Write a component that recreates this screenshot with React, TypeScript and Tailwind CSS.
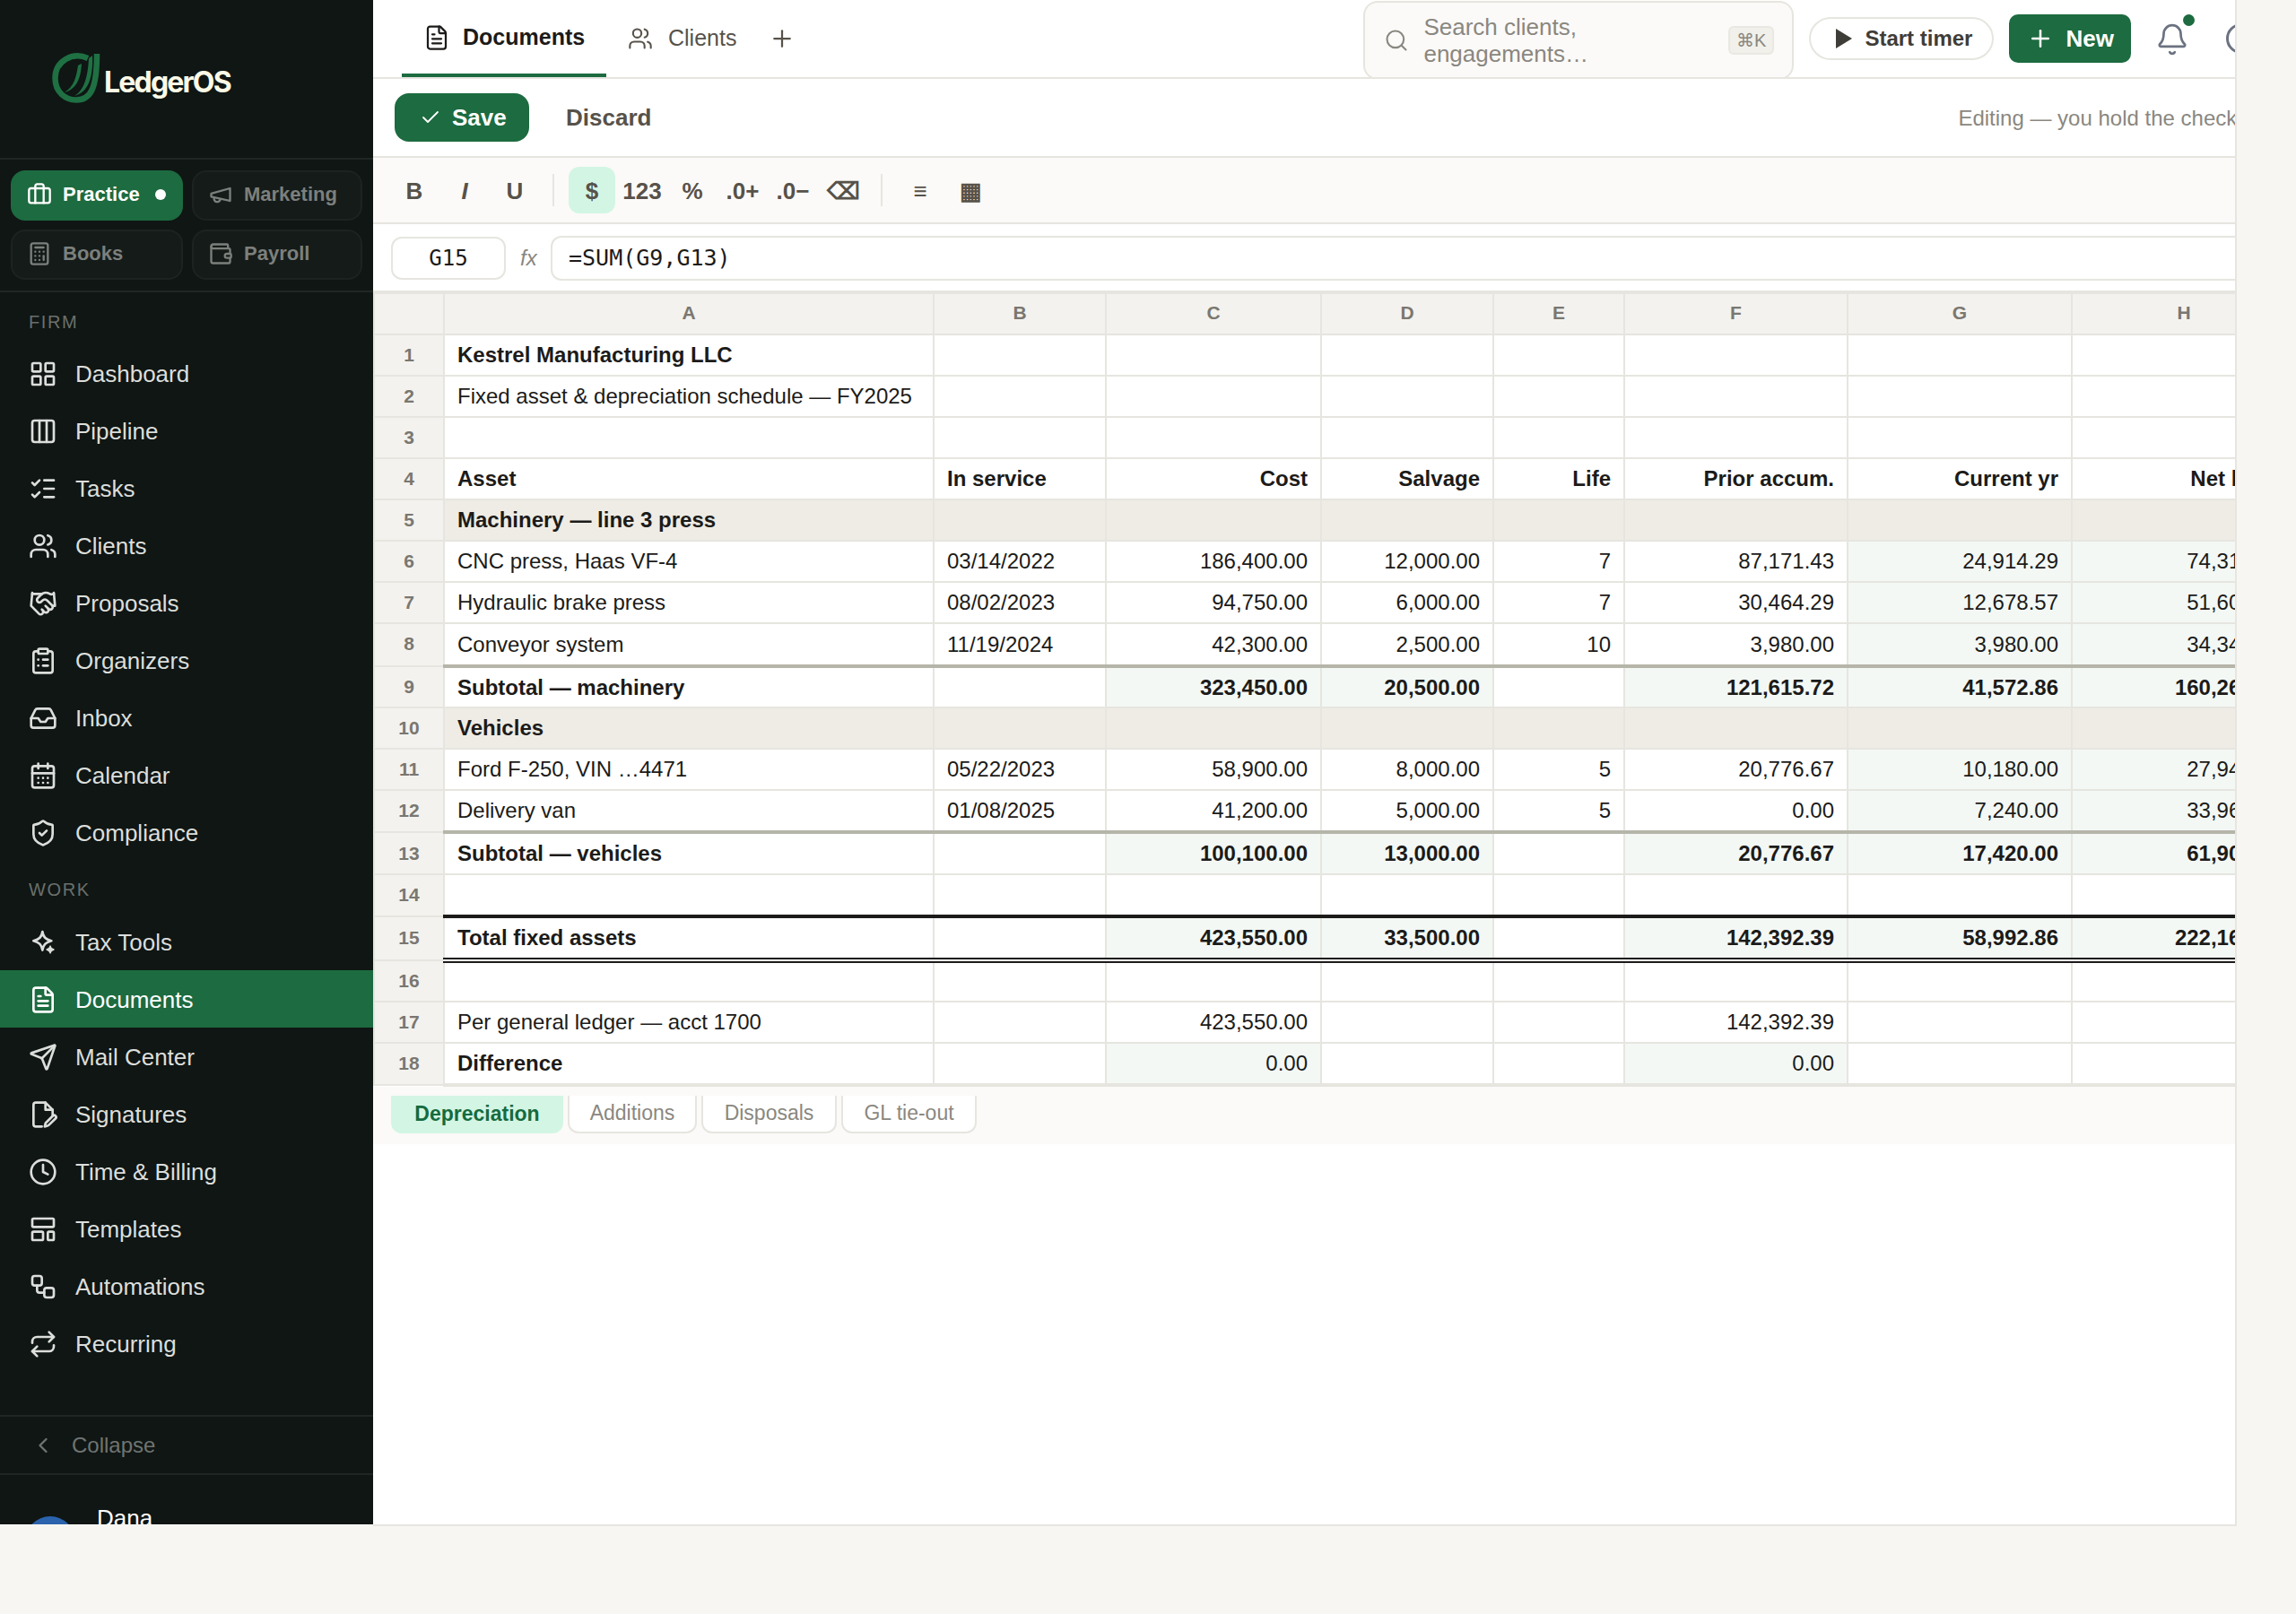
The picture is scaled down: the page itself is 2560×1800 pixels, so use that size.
import React from 'react';
import clsx from 'clsx';
import {
  Briefcase, Calculator, Wallet, LayoutGrid, Columns3, ListChecks, Users, Handshake, ClipboardList,
  Inbox, CalendarDays, ShieldCheck, FileText, Send, Clock, LayoutTemplate, Workflow, Repeat,
  ChevronLeft, Plus, Check, Search, Bell,
} from 'lucide-react';

const IconSparkles = ({ size = 32 }: { size?: number }) => (
  <svg width={size} height={size} viewBox="0 0 24 24" fill="none" stroke="currentColor" strokeWidth="2" strokeLinejoin="round">
    <path d="M11.5 3C12.2 7.5 14 9.5 19 10.7C14 12 12.2 14 11.5 18.5C10.8 14 9 12 4 10.7C9 9.5 10.8 7.5 11.5 3Z" />
    <path d="M18 15c.3 1.6 1.2 2.5 3 3c-1.8.5-2.7 1.4-3 3c-.3-1.6-1.2-2.5-3-3c1.8-.5 2.7-1.4 3-3Z" fill="currentColor" strokeWidth="1" />
  </svg>
);

const IconSignature = ({ size = 32 }: { size?: number }) => (
  <svg width={size} height={size} viewBox="0 0 24 24" fill="none" stroke="currentColor" strokeWidth="2" strokeLinecap="round" strokeLinejoin="round">
    <path d="M11 22H6a2 2 0 0 1-2-2V4a2 2 0 0 1 2-2h8l6 6v5" />
    <path d="M14 2v6h6" />
    <path d="M22.4 15.4a1.6 1.6 0 0 0-2.3-2.3l-5.6 5.6a2 2 0 0 0-.5.9l-.6 2.4 2.4-.6a2 2 0 0 0 .9-.5Z" />
  </svg>
);

const IconMegaphone = ({ size = 28 }: { size?: number }) => (
  <svg width={size} height={size} viewBox="0 0 24 24" fill="none" stroke="currentColor" strokeWidth="2" strokeLinecap="round" strokeLinejoin="round">
    <path d="m3 11 18-5v12L3 14v-3z" />
    <path d="M11.6 16.8a3 3 0 1 1-5.8-1.6" />
  </svg>
);

const LogoMark = () => (
  <svg width="58" height="62" viewBox="0 0 58 62" fill="none">
    <path d="M40 8C22 0 3.5 12 3.5 30C3.5 46 15 54.5 27 54.5C44 54.5 50 40 50 3" stroke="#1f7043" strokeWidth="6.5" />
    <path d="M14 46C24 40 27 30 29 16L33 14C32 30 28 42 14 46Z" fill="#1f7043" />
    <path d="M25 50C37 43 40 26 41 8L45 5C46 28 41 46 25 50Z" fill="#1f7043" />
  </svg>
);

const firmNav = [
  { label: 'Dashboard', icon: <LayoutGrid size={32} /> },
  { label: 'Pipeline', icon: <Columns3 size={32} /> },
  { label: 'Tasks', icon: <ListChecks size={32} /> },
  { label: 'Clients', icon: <Users size={32} /> },
  { label: 'Proposals', icon: <Handshake size={32} /> },
  { label: 'Organizers', icon: <ClipboardList size={32} /> },
  { label: 'Inbox', icon: <Inbox size={32} /> },
  { label: 'Calendar', icon: <CalendarDays size={32} /> },
  { label: 'Compliance', icon: <ShieldCheck size={32} /> },
];

const workNav = [
  { label: 'Tax Tools', icon: <IconSparkles /> },
  { label: 'Documents', icon: <FileText size={32} />, active: true },
  { label: 'Mail Center', icon: <Send size={32} /> },
  { label: 'Signatures', icon: <IconSignature /> },
  { label: 'Time & Billing', icon: <Clock size={32} /> },
  { label: 'Templates', icon: <LayoutTemplate size={32} /> },
  { label: 'Automations', icon: <Workflow size={32} /> },
  { label: 'Recurring', icon: <Repeat size={32} /> },
];

const NavItem = ({ label, icon, active }: { label: string; icon: React.ReactNode; active?: boolean }) => (
  <div className={clsx('flex h-16 shrink-0 items-center gap-5 pt-[2px] pl-8 text-[26px]', active ? 'bg-[#1d6b40] text-white' : 'text-[#dcdedb]')}>
    {icon}
    <span>{label}</span>
  </div>
);

const Segment = ({ label, icon, active }: { label: string; icon: React.ReactNode; active?: boolean }) => (
  <div
    className={clsx(
      'flex h-[56px] items-center gap-[12px] rounded-2xl border-2 pb-[3px] pl-[16px] text-[22px] font-bold',
      active ? 'border-[#1d6b40] bg-[#1d6b40] text-white' : 'border-[#1c2321] bg-[#151b19] text-[#7c807d]',
    )}
  >
    {icon}
    <span>{label}</span>
    {active && <span className="ml-[5px] size-3 rounded-full bg-white" />}
  </div>
);

const Sidebar = () => (
  <aside className="flex h-full w-[416px] shrink-0 flex-col overflow-hidden bg-[#0f1614]">
    <div className="flex h-[178px] shrink-0 items-center border-b-2 border-[#1f2624] pl-[58px]">
      <LogoMark />
      <span className="mt-[8px] font-['Inter',sans-serif] text-[32px] font-bold tracking-[-1.8px] text-[#fbf9e6]">LedgerOS</span>
    </div>
    <div className="grid shrink-0 grid-cols-[192px_190px] gap-x-[10px] gap-y-[10px] border-b-2 border-[#1f2624] pt-3 pb-3 pl-3">
      <Segment label="Practice" icon={<Briefcase size={28} />} active />
      <Segment label="Marketing" icon={<IconMegaphone />} />
      <Segment label="Books" icon={<Calculator size={28} />} />
      <Segment label="Payroll" icon={<Wallet size={28} />} />
    </div>
    <div className="shrink-0 pt-[21px] pb-[13px] pl-8 text-[20px] leading-6 tracking-[1.6px] text-[#6b706c]">FIRM</div>
    {firmNav.map((n) => <NavItem key={n.label} {...n} />)}
    <div className="shrink-0 pt-5 pb-[14px] pl-8 text-[20px] leading-6 tracking-[1.6px] text-[#6b706c]">WORK</div>
    {workNav.map((n) => <NavItem key={n.label} {...n} />)}
    <div className="mt-[48px] flex h-[67px] shrink-0 items-center gap-[18px] border-y-2 border-[#1f2624] pl-[34px] text-[24px] text-[#6f7471]">
      <ChevronLeft size={28} />
      <span>Collapse</span>
    </div>
    <div className="flex shrink-0 gap-[24px] pt-[32px] pl-[28px]">
      <div className="mt-[14px] size-[56px] rounded-full bg-[#2b63ad]" />
      <div className="text-[26px] leading-8 text-white">Dana<br />Whitfield</div>
    </div>
  </aside>
);

const TopBar = () => (
  <div className="flex h-[88px] shrink-0 items-center overflow-hidden border-b-2 border-[#e6e5df] pl-8">
    <div className="flex h-[86px] w-[228px] shrink-0 items-center gap-[14px] border-b-4 border-[#1d6b40] pt-[2px] pl-6 text-[25px] font-bold text-[#1c1b19]">
      <FileText size={30} strokeWidth={1.8} />
      <span>Documents</span>
    </div>
    <div className="ml-6 flex shrink-0 items-center gap-[17px] text-[25px] text-[#57524a]">
      <Users size={28} strokeWidth={1.8} />
      <span>Clients</span>
    </div>
    <Plus size={30} strokeWidth={1.8} className="ml-[36px] shrink-0 text-[#57524a]" />
    <div className="mt-[3px] ml-[633px] flex h-[88px] w-[480px] shrink-0 items-center rounded-2xl border-2 border-[#e6e5df] bg-[#fbfaf8] pl-[21px]">
      <Search size={28} strokeWidth={1.8} className="shrink-0 text-[#8a8780]" />
      <span className="ml-[16px] w-[300px] text-[26px] leading-[30px] text-[#8a8780]">Search clients, engagements…</span>
      <span className="mr-5 ml-auto rounded-md border-2 border-[#e9e8e2] bg-[#f1f0eb] px-[7px] text-[20px] leading-7 text-[#8a8780]">⌘K</span>
    </div>
    <button className="ml-[17px] flex h-[48px] w-[206px] shrink-0 items-center gap-[13px] rounded-full border-2 border-[#e6e5df] bg-white pl-[27px] text-[24px] font-bold text-[#3f3d38]">
      <svg width="20" height="24" viewBox="0 0 20 24"><path d="M1 1L19 12L1 23Z" fill="#3f3d38" /></svg>
      <span>Start timer</span>
    </button>
    <button className="ml-[17px] flex h-[54px] w-[136px] shrink-0 items-center gap-[13px] rounded-[10px] bg-[#1d6b40] pl-[20px] text-[26px] font-bold text-white">
      <Plus size={30} />
      <span>New</span>
    </button>
    <div className="relative mt-[2px] ml-[27px] shrink-0 text-[#6b7280]">
      <Bell size={38} strokeWidth={1.7} />
      <span className="absolute -top-[9px] right-[-6px] size-[13px] rounded-full bg-[#1d6b40]" />
    </div>
    <div className="ml-[41px] size-[34px] shrink-0 rounded-full border-[3px] border-[#6b7280]" />
  </div>
);

const ActionBar = () => (
  <div className="flex h-[88px] shrink-0 items-center overflow-hidden border-b-2 border-[#e6e5df] pl-6 whitespace-nowrap">
    <button className="flex h-[54px] w-[150px] shrink-0 items-center gap-[12px] rounded-2xl bg-[#1d6b40] pl-[28px] text-[26px] font-bold text-white">
      <Check size={24} strokeWidth={1.8} />
      <span>Save</span>
    </button>
    <span className="ml-[41px] shrink-0 text-[26px] font-bold text-[#57524a]">Discard</span>
    <span className="ml-[1457px] shrink-0 pt-[2px] text-[24px] text-[#8a8780]">Editing — you hold the check-out</span>
  </div>
);

const tools = [
  { t: 'B', c: 'font-bold' },
  { t: 'I', c: 'font-bold italic' },
  { t: 'U', c: 'font-bold' },
  null,
  { t: '$', c: 'font-bold bg-[#d3f5e4] text-[#156b3f]' },
  { t: '123', c: 'font-bold' },
  { t: '%', c: 'font-bold' },
  { t: '.0+', c: 'font-bold' },
  { t: '.0−', c: 'font-bold' },
  { t: '⌫', c: 'font-bold' },
  null,
  { t: '≡', c: 'font-bold' },
  { t: '▦', c: 'font-bold' },
];

const Toolbar = () => (
  <div className="flex h-[74px] shrink-0 items-center gap-[4px] border-b-2 border-[#e6e5df] bg-[#fbfaf8] pl-5">
    {tools.map((b, i) =>
      b ? (
        <div key={i} className={clsx('flex h-[52px] w-[52px] items-center justify-center rounded-xl pt-[2px] text-[26px] text-[#57524a]', b.c)}>
          {b.t}
        </div>
      ) : (
        <div key={i} className="mx-[12px] h-9 w-[2px] bg-[#e6e5df]" />
      ),
    )}
  </div>
);

const FormulaBar = () => (
  <div className="flex h-[78px] shrink-0 items-center gap-[16px] border-b-4 border-[#e6e5df] pt-[2px] pl-5 font-['DejaVu_Sans_Mono',monospace]">
    <div className="flex h-[48px] w-[128px] shrink-0 items-center justify-center rounded-xl border-2 border-[#e6e5df] text-[24px] text-[#1c1b19]">G15</div>
    <span className="w-[18px] shrink-0 font-['Liberation_Sans',sans-serif] text-[24px] text-[#8a8780] italic">fx</span>
    <div className="flex h-[50px] flex-1 items-center rounded-l-xl border-y-2 border-l-2 border-[#e6e5df] pl-[18px] text-[25px] text-[#1c1b19]">=SUM(G9,G13)</div>
  </div>
);

type Row = {
  n: number;
  cells: string[];
  h: string;
  bold?: boolean;
  boldFirst?: boolean;
  section?: boolean;
  shade?: number[];
  bottom?: string;
};

const dep = [6, 7];
const sub = [2, 3, 5, 6, 7];

const rows: Row[] = [
  { n: 1, h: 'h-[46px]', bold: true, cells: ['Kestrel Manufacturing LLC', '', '', '', '', '', '', ''] },
  { n: 2, h: 'h-[46px]', cells: ['Fixed asset & depreciation schedule — FY2025', '', '', '', '', '', '', ''] },
  { n: 3, h: 'h-[46px]', cells: ['', '', '', '', '', '', '', ''] },
  { n: 4, h: 'h-[46px]', bold: true, cells: ['Asset', 'In service', 'Cost', 'Salvage', 'Life', 'Prior accum.', 'Current yr', 'Net book'] },
  { n: 5, h: 'h-[46px]', bold: true, section: true, cells: ['Machinery — line 3 press', '', '', '', '', '', '', ''] },
  { n: 6, h: 'h-[46px]', shade: dep, cells: ['CNC press, Haas VF-4', '03/14/2022', '186,400.00', '12,000.00', '7', '87,171.43', '24,914.29', '74,314.28'] },
  { n: 7, h: 'h-[46px]', shade: dep, cells: ['Hydraulic brake press', '08/02/2023', '94,750.00', '6,000.00', '7', '30,464.29', '12,678.57', '51,607.14'] },
  { n: 8, h: 'h-[48px]', shade: dep, bottom: 'border-b-4 border-b-[#b6b5a9]', cells: ['Conveyor system', '11/19/2024', '42,300.00', '2,500.00', '10', '3,980.00', '3,980.00', '34,340.00'] },
  { n: 9, h: 'h-[46px]', bold: true, shade: sub, cells: ['Subtotal — machinery', '', '323,450.00', '20,500.00', '', '121,615.72', '41,572.86', '160,261.42'] },
  { n: 10, h: 'h-[46px]', bold: true, section: true, cells: ['Vehicles', '', '', '', '', '', '', ''] },
  { n: 11, h: 'h-[46px]', shade: dep, cells: ['Ford F-250, VIN …4471', '05/22/2023', '58,900.00', '8,000.00', '5', '20,776.67', '10,180.00', '27,943.33'] },
  { n: 12, h: 'h-[47px]', shade: dep, bottom: 'border-b-4 border-b-[#b6b5a9]', cells: ['Delivery van', '01/08/2025', '41,200.00', '5,000.00', '5', '0.00', '7,240.00', '33,960.00'] },
  { n: 13, h: 'h-[47px]', bold: true, shade: sub, cells: ['Subtotal — vehicles', '', '100,100.00', '13,000.00', '', '20,776.67', '17,420.00', '61,903.33'] },
  { n: 14, h: 'h-[47px]', bottom: 'border-b-4 border-b-[#1c1b19]', cells: ['', '', '', '', '', '', '', ''] },
  { n: 15, h: 'h-[49px]', bold: true, shade: sub, bottom: 'border-b-[6px] border-double border-b-[#1c1b19]', cells: ['Total fixed assets', '', '423,550.00', '33,500.00', '', '142,392.39', '58,992.86', '222,164.75'] },
  { n: 16, h: 'h-[46px]', cells: ['', '', '', '', '', '', '', ''] },
  { n: 17, h: 'h-[46px]', cells: ['Per general ledger — acct 1700', '', '423,550.00', '', '', '142,392.39', '', ''] },
  { n: 18, h: 'h-[47px]', boldFirst: true, shade: [2, 5], bottom: 'border-b-4 border-b-[#e6e5df]', cells: ['Difference', '', '0.00', '', '', '0.00', '', ''] },
];

const Sheet = () => (
  <div className="shrink-0 overflow-hidden">
    <table className="w-[2143px] table-fixed border-collapse text-[24px] text-[#1c1b19]">
      <colgroup>
        <col className="w-[78px]" />
        <col className="w-[546px]" />
        <col className="w-[192px]" />
        <col className="w-[240px]" />
        <col className="w-[192px]" />
        <col className="w-[146px]" />
        <col className="w-[249px]" />
        <col className="w-[250px]" />
        <col className="w-[250px]" />
      </colgroup>
      <thead>
        <tr className="h-[45px] bg-[#f3f2ee] text-[21px] font-bold text-[#7a7770]">
          <th className="border-2 border-t-0 border-[#e6e5df]" />
          {['A', 'B', 'C', 'D', 'E', 'F', 'G', 'H'].map((c) => (
            <th key={c} className="border-2 border-t-0 border-[#e6e5df] pb-[2px] font-bold">{c}</th>
          ))}
        </tr>
      </thead>
      <tbody>
        {rows.map((r) => (
          <tr key={r.n} className={r.h}>
            <td className={clsx('border-2 border-[#e6e5df] bg-[#f3f2ee] text-center text-[21px] font-bold text-[#7a7770]', r.bottom && 'pb-[2px]')}>{r.n}</td>
            {r.cells.map((v, i) => (
              <td
                key={i}
                className={clsx(
                  'overflow-hidden border-2 border-[#e6e5df] px-[14px] whitespace-nowrap',
                  i > 1 && 'text-right',
                  (r.bold || (r.boldFirst && i === 0)) && 'font-bold',
                  r.section && 'bg-[#efece5]',
                  r.shade?.includes(i) && 'bg-[#f3f8f5]',
                  r.bottom,
                )}
              >
                {v}
              </td>
            ))}
          </tr>
        ))}
      </tbody>
    </table>
  </div>
);

const SheetTabs = () => (
  <div className="flex h-[64px] shrink-0 items-start gap-[5px] bg-[#fbfaf8] pt-[10px] pl-5 text-[23px] text-[#8a8780]">
    <div className="flex h-[42px] w-[192px] items-center justify-center rounded-b-xl bg-[#d3f5e4] pb-[2px] font-bold text-[#156b3f]">Depreciation</div>
    <div className="flex h-[42px] w-[144px] items-center justify-center rounded-b-xl border-x-2 border-b-2 border-[#e6e5df] bg-white pb-[2px]">Additions</div>
    <div className="flex h-[42px] w-[151px] items-center justify-center rounded-b-xl border-x-2 border-b-2 border-[#e6e5df] bg-white pb-[2px]">Disposals</div>
    <div className="flex h-[42px] w-[151px] items-center justify-center rounded-b-xl border-x-2 border-b-2 border-[#e6e5df] bg-white pb-[2px]">GL tie-out</div>
  </div>
);

export default function App() {
  return (
    <div className="h-[1800px] bg-[#f7f6f2] font-['Liberation_Sans',Arial,sans-serif]">
      <div className="flex h-[1702px] w-[2494px]">
        <div className="h-[1700px]"><Sidebar /></div>
        <main className="flex min-w-0 flex-1 flex-col overflow-hidden border-r-2 border-b-2 border-[#e6e5df] bg-white">
          <TopBar />
          <ActionBar />
          <Toolbar />
          <FormulaBar />
          <Sheet />
          <SheetTabs />
        </main>
      </div>
    </div>
  );
}
